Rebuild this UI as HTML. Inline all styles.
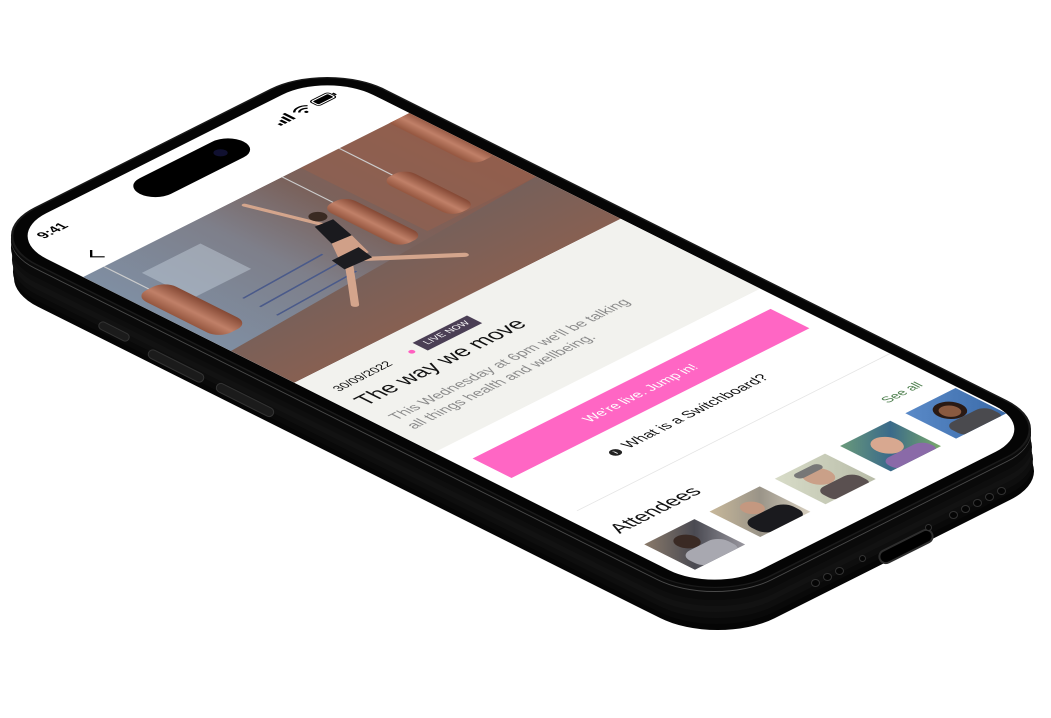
<!DOCTYPE html>
<html><head><meta charset="utf-8">
<style>
html,body{margin:0;padding:0;background:#fff;width:1051px;height:718px;overflow:hidden;position:relative;font-family:"Liberation Sans",sans-serif}
.w{position:absolute;left:0;top:0;width:390px;height:844px;transform-origin:0 0}
.body{position:absolute;left:-14px;top:-14px;width:418px;height:872px;border-radius:68px;box-sizing:border-box}
.scr{position:absolute;left:0;top:0;width:390px;height:844px;border-radius:54px;background:#fff;overflow:hidden}
.a{position:absolute;white-space:nowrap}
.ph{position:absolute;top:745px;width:60px;height:60px;overflow:hidden}
.dot{position:absolute;width:7px;height:6px;border-radius:50%;background:#050505;box-shadow:0 0 0 1px #333}
</style></head><body>

<!-- extrusion -->
<div class="w" style="transform:translate(3px,42px) matrix(0.837,-0.4205,0.8454,0.423,1,236)"><div class="body" style="background:#050505"></div></div>
<div class="w" style="transform:translate(2px,36px) matrix(0.837,-0.4205,0.8454,0.423,1,236)"><div class="body" style="background:#090909"></div></div>
<div class="w" style="transform:translate(2px,30px) matrix(0.837,-0.4205,0.8454,0.423,1,236)"><div class="body" style="background:#0e0e0e"></div></div>
<div class="w" style="transform:translate(1px,24px) matrix(0.837,-0.4205,0.8454,0.423,1,236)"><div class="body" style="background:#121212"></div></div>
<div class="w" style="transform:translate(1px,18px) matrix(0.837,-0.4205,0.8454,0.423,1,236)"><div class="body" style="background:#0e0e0e"></div></div>
<div class="w" style="transform:translate(0px,12px) matrix(0.837,-0.4205,0.8454,0.423,1,236)"><div class="body" style="background:#0a0a0a"></div></div>
<div class="w" style="transform:translate(0px,6px) matrix(0.837,-0.4205,0.8454,0.423,1,236)"><div class="body" style="background:#0a0a0a"></div></div>
<div class="w" style="transform:translate(0px,4px) matrix(0.837,-0.4205,0.8454,0.423,1,236)"><div class="body" style="background:#4a4a4a"></div></div>
<div class="w" style="transform:translate(0px,3px) matrix(0.837,-0.4205,0.8454,0.423,1,236)"><div class="body" style="background:#0a0a0a"></div></div>

<!-- side buttons -->
<div style="position:absolute;left:98px;top:328px;width:32px;height:7px;border-radius:4px;background:#1b1b1b;box-shadow:0 0 0 1px #333;transform:rotate(26.6deg)"></div>
<div style="position:absolute;left:146px;top:362px;width:60px;height:8px;border-radius:4px;background:#1b1b1b;box-shadow:0 0 0 1px #333;transform:rotate(26.6deg)"></div>
<div style="position:absolute;left:214px;top:396px;width:62px;height:8px;border-radius:4px;background:#1b1b1b;box-shadow:0 0 0 1px #333;transform:rotate(26.6deg)"></div>

<!-- bottom port & speakers -->
<div style="position:absolute;left:878px;top:541px;width:56px;height:11px;border-radius:6px;background:#000;box-shadow:0 0 0 2px #2e2e2e;transform:rotate(-26.7deg)"></div>
<div class="dot" style="left:812px;top:580px"></div>
<div class="dot" style="left:824px;top:574px"></div>
<div class="dot" style="left:836px;top:568px"></div>
<div class="dot" style="left:860px;top:556px;width:5px;height:5px"></div>
<div class="dot" style="left:926px;top:525px;width:5px;height:5px"></div>
<div class="dot" style="left:950px;top:512px"></div>
<div class="dot" style="left:962px;top:506px"></div>
<div class="dot" style="left:974px;top:500px"></div>
<div class="dot" style="left:986px;top:494px"></div>
<div class="dot" style="left:998px;top:488px"></div>

<!-- top surface -->
<div class="w" style="transform:matrix(0.837,-0.4205,0.8454,0.423,1,236)">
 <div class="body" style="background:#050505;border:2px solid #1a1a1a"></div>
 <div class="scr">
  <!-- status -->
  <div class="a" style="left:22px;top:16px;font-size:15px;font-weight:bold;color:#000">9:41</div>
  <div style="position:absolute;left:133px;top:14px;width:124px;height:37px;border-radius:19px;background:#000"></div>
  <div style="position:absolute;left:224px;top:26px;width:12px;height:12px;border-radius:50%;background:#101030"></div>
  <svg style="position:absolute;left:298px;top:22px" width="74" height="16" viewBox="0 0 74 16">
   <rect x="0" y="10" width="3" height="4" fill="#000"/><rect x="5" y="7" width="3" height="7" fill="#000"/><rect x="10" y="4" width="3" height="10" fill="#000"/><rect x="15" y="1" width="3" height="13" fill="#000"/>
   <path d="M24 6 A11 11 0 0 1 40 6 M27 9 A7 7 0 0 1 37 9" stroke="#000" stroke-width="2" fill="none"/><circle cx="32" cy="12.5" r="1.8" fill="#000"/>
   <rect x="46" y="2" width="22" height="11" rx="3" fill="none" stroke="#000" stroke-width="1.2"/><rect x="48" y="4" width="18" height="7" rx="1.5" fill="#000"/><rect x="69" y="6" width="2" height="4" fill="#000"/>
  </svg>
  <svg style="position:absolute;left:26px;top:68px" width="14" height="20" viewBox="0 0 14 20"><path d="M11 2 L3 10 L11 18" stroke="#000" stroke-width="2" fill="none"/></svg>

  <!-- hero image -->
  <svg style="position:absolute;left:0;top:97px" width="390" height="250" viewBox="0 0 390 250">
   <defs>
    <linearGradient id="wall" x1="0" y1="0" x2="1" y2="0"><stop offset="0" stop-color="#7f8ea2"/><stop offset="0.35" stop-color="#7e7f8a"/><stop offset="0.6" stop-color="#7a625c"/><stop offset="1" stop-color="#8e5a4a"/></linearGradient>
    <linearGradient id="floor" x1="0" y1="0" x2="0" y2="1"><stop offset="0" stop-color="#76605a"/><stop offset="1" stop-color="#876052"/></linearGradient>
    <linearGradient id="bag" x1="0" y1="0" x2="1" y2="0"><stop offset="0" stop-color="#94563f"/><stop offset="0.45" stop-color="#c08068"/><stop offset="1" stop-color="#844834"/></linearGradient>
   </defs>
   <rect width="390" height="250" fill="url(#wall)"/>
   <rect x="40" y="30" width="70" height="60" fill="#c8d2de" opacity="0.45"/>
   <rect x="260" y="0" width="130" height="150" fill="#94604f" opacity="0.6"/>
   <path d="M0 175 L390 150 L390 250 L0 250Z" fill="url(#floor)"/>
   <path d="M70 120 L170 115 M70 140 L170 135 M70 160 L170 155" stroke="#4a5a8a" stroke-width="2"/>
   <path d="M25 0 L25 53 M238 0 L238 60 M306 0 L306 63" stroke="#ccc" stroke-width="1.5"/>
   <rect x="8" y="53" width="36" height="100" rx="14" fill="url(#bag)"/>
   <rect x="224" y="60" width="29" height="93" rx="12" fill="url(#bag)"/>
   <rect x="292" y="63" width="29" height="85" rx="12" fill="url(#bag)"/>
   <rect x="366" y="-20" width="30" height="120" rx="12" fill="url(#bag)"/>
   <!-- dancer -->
   <path d="M207 85 L182 11" stroke="#d4a58c" stroke-width="5" stroke-linecap="round"/>
   <path d="M183 140 L254 200" stroke="#d4a58c" stroke-width="7" stroke-linecap="round"/>
   <path d="M176 140 L150 170 L129 194" stroke="#d4a58c" stroke-width="7" stroke-linecap="round" fill="none"/>
   <circle cx="212" cy="68" r="8" fill="#3a2a22"/>
   <path d="M198 78 L218 80 L210 110 L188 108Z" fill="#1a1a1e"/>
   <path d="M188 108 L210 110 L200 140 L168 140Z" fill="#d0a088"/>
   <path d="M168 128 L200 128 L196 148 L165 146Z" fill="#1c1c20"/>
  </svg>

  <!-- beige panel -->
  <div style="position:absolute;left:0;top:347px;width:390px;height:165px;background:#f2f2ee"></div>
  <div class="a" style="left:16px;top:372px;font-size:13px;color:#111">30/09/2022</div>
  <div style="position:absolute;left:104px;top:377px;width:6px;height:6px;border-radius:50%;background:#ff5fc0"></div>
  <div class="a" style="left:118px;top:370px;height:18px;line-height:18px;padding:0 7px;background:#4b3f55;color:#fff;font-size:10px;letter-spacing:0.3px">LIVE NOW</div>
  <div class="a" style="left:15px;top:396px;font-size:24px;color:#111">The way we move</div>
  <div class="a" style="left:16px;top:437px;font-size:16px;line-height:21px;color:#8a8a8a">This Wednesday at 6pm we'll be talking<br>all things health and wellbeing.</div>

  <!-- button -->
  <div style="position:absolute;left:16px;top:542px;width:356px;height:46px;background:#ff66c4;color:#fff;font-size:15px;text-align:center;line-height:46px">We’re live. Jump in!</div>
  <div style="position:absolute;left:103px;top:614px;width:11px;height:11px;border-radius:50%;background:#222;color:#fff;font-size:8px;line-height:11px;text-align:center;font-weight:bold">i</div>
  <div class="a" style="left:121px;top:610px;font-size:16px;color:#111">What is a Switchboard?</div>
  <div style="position:absolute;left:16px;top:665px;width:374px;height:1px;background:#e4e4e4"></div>

  <div class="a" style="left:14px;top:698px;font-size:22px;color:#111">Attendees</div>
  <div class="a" style="right:18px;top:710px;font-size:14px;color:#4b7d4b">See all</div>

  <div class="ph" style="left:16px;background:linear-gradient(135deg,#8a7a6a,#4a4a52 50%,#9a98a0)"><div style="position:absolute;left:18px;top:10px;width:22px;height:24px;border-radius:50%;background:#3a2a24"></div><div style="position:absolute;left:8px;top:34px;width:46px;height:30px;border-radius:12px;background:#a8a8b0"></div></div>
  <div class="ph" style="left:94px;background:linear-gradient(135deg,#c8b89a,#9a9488 50%,#d8d0c0)"><div style="position:absolute;left:20px;top:10px;width:20px;height:22px;border-radius:50%;background:#c49880"></div><div style="position:absolute;left:6px;top:32px;width:50px;height:30px;border-radius:12px;background:#1a1a1e"></div></div>
  <div class="ph" style="left:172px;background:linear-gradient(135deg,#d8dcc8,#b8bca8)"><div style="position:absolute;left:16px;top:8px;width:26px;height:30px;border-radius:50%;background:#caa088"></div><div style="position:absolute;left:14px;top:6px;width:30px;height:10px;border-radius:8px;background:#777"></div><div style="position:absolute;left:10px;top:38px;width:44px;height:26px;border-radius:10px;background:#5a5050"></div></div>
  <div class="ph" style="left:250px;background:linear-gradient(135deg,#6a9a7a,#3a6a8a 50%,#7aaa6a)"><div style="position:absolute;left:16px;top:12px;width:26px;height:30px;border-radius:50%;background:#d8a890"></div><div style="position:absolute;left:6px;top:42px;width:50px;height:22px;border-radius:10px;background:#8a6aa8"></div></div>
  <div class="ph" style="left:328px;background:linear-gradient(135deg,#5a8ac8,#3a6aa8)"><div style="position:absolute;left:16px;top:8px;width:28px;height:30px;border-radius:50%;background:#2a1a14"></div><div style="position:absolute;left:20px;top:14px;width:18px;height:20px;border-radius:50%;background:#8a5a40"></div><div style="position:absolute;left:8px;top:38px;width:48px;height:26px;border-radius:10px;background:#4a4a4e"></div></div>
 </div>
</div>
</body></html>
